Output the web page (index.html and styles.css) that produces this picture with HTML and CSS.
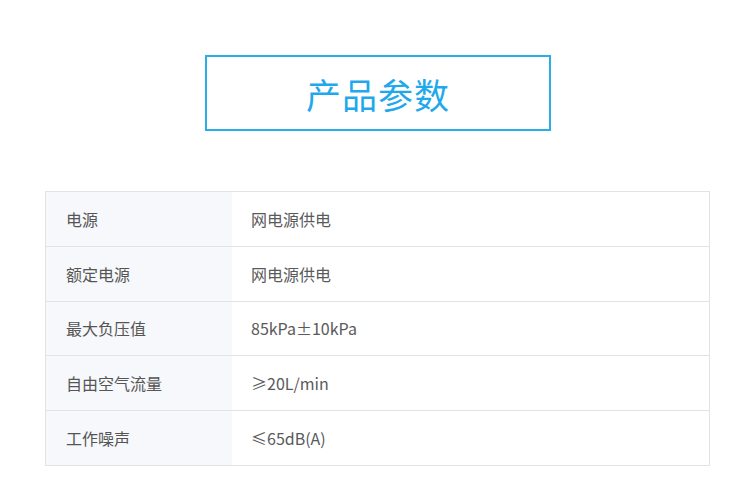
FILE: index.html
```html
<!DOCTYPE html>
<html lang="zh">
<head>
<meta charset="utf-8">
<link rel="stylesheet" href="styles.css">
</head>
<body>
<div class="page">
  <div class="title-wrap">
    <div class="title-box">产品参数</div>
  </div>
  <table class="params">
    <tr><td class="label">电源</td><td class="value">网电源供电</td></tr>
    <tr><td class="label">额定电源</td><td class="value">网电源供电</td></tr>
    <tr><td class="label">最大负压值</td><td class="value">85kPa±10kPa</td></tr>
    <tr><td class="label">自由空气流量</td><td class="value">≥20L/min</td></tr>
    <tr><td class="label">工作噪声</td><td class="value">≤65dB(A)</td></tr>
  </table>
</div>
</body>
</html>
```
FILE: styles.css
```css
html, body {
  margin: 0;
  padding: 0;
  background: #ffffff;
}
body {
  font-family: "Noto Sans CJK SC", "Noto Sans", sans-serif;
  color: #333;
}
.page {
  padding: 55px 33px 0 45px;
}
.title-wrap {
  display: flex;
  justify-content: flex-start;
  padding-left: 160px;
}
.title-box {
  width: 342px;
  height: 72px;
  border: 2px solid #2aaee8;
  color: #1fa9ec;
  font-size: 35px;
  display: flex;
  align-items: center;
  justify-content: center;
  letter-spacing: 1px;
}
.params {
  margin-top: 60px;
  width: 665px;
  border-collapse: collapse;
  border: 1px solid #e3e3e3;
}
.params tr {
  height: 54.8px;
}
.params td {
  padding: 0;
  border-bottom: 1px solid #e3e3e3;
  font-size: 16px;
  color: #555;
  line-height: 1;
}
.params .label {
  width: 166px;
  padding-left: 20px;
  background: #f6f8fb;
}
.params .value {
  padding-left: 19px;
  background: #fff;
  color: #5a5a5a;
}
```
